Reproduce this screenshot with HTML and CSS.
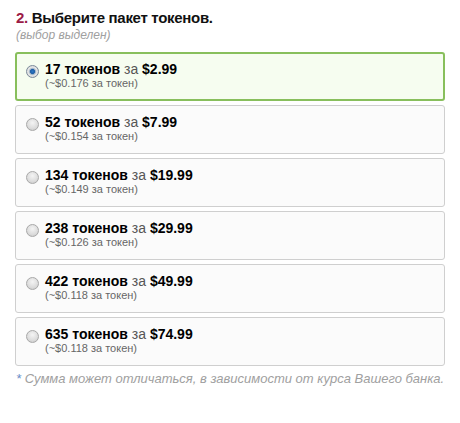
FILE: index.html
```html
<!DOCTYPE html>
<html>
<head>
<meta charset="utf-8">
<link rel="stylesheet" href="styles.css">
</head>
<body>
<div class="wrap">
  <h2 class="title"><span class="num">2.</span> Выберите пакет токенов.</h2>
  <div class="hint">(выбор выделен)</div>
  <ul class="packs">
    <li class="pack selected"><span class="radio on"></span><div class="info"><div class="main"><b>17 токенов</b> за <b>$2.99</b></div><div class="per">(~$0.176 за токен)</div></div></li>
    <li class="pack"><span class="radio"></span><div class="info"><div class="main"><b>52 токенов</b> за <b>$7.99</b></div><div class="per">(~$0.154 за токен)</div></div></li>
    <li class="pack"><span class="radio"></span><div class="info"><div class="main"><b>134 токенов</b> за <b>$19.99</b></div><div class="per">(~$0.149 за токен)</div></div></li>
    <li class="pack"><span class="radio"></span><div class="info"><div class="main"><b>238 токенов</b> за <b>$29.99</b></div><div class="per">(~$0.126 за токен)</div></div></li>
    <li class="pack"><span class="radio"></span><div class="info"><div class="main"><b>422 токенов</b> за <b>$49.99</b></div><div class="per">(~$0.118 за токен)</div></div></li>
    <li class="pack"><span class="radio"></span><div class="info"><div class="main"><b>635 токенов</b> за <b>$74.99</b></div><div class="per">(~$0.118 за токен)</div></div></li>
  </ul>
  <div class="note"><span class="ast">*</span> Сумма может отличаться, в зависимости от курса Вашего банка.</div>
</div>
</body>
</html>
```
FILE: styles.css
```css
html, body { margin: 0; padding: 0; background: #fff; }
body { font-family: "Liberation Sans", Arial, sans-serif; color: #000; }
.wrap { padding: 9px 15px 0 15px; width: 430px; }
.title { margin: 0 0 0 1px; font-size: 15px; line-height: 18px; font-weight: bold; color: #111; letter-spacing: -0.3px; }
.num { color: #9b1b46; }
.hint { margin: 1px 0 0 1px; font-size: 12px; line-height: 14px; font-style: italic; color: #a0a0a0; }
.packs { list-style: none; margin: 10px 0 0 0; padding: 0; display: flex; flex-direction: column; gap: 4px; }
.pack { box-sizing: border-box; height: 49px; border: 1px solid #cfcfcf; border-radius: 3px; background: #fbfbfb; display: flex; align-items: flex-start; padding: 8px 0 0 10px; }
.pack.selected { border: 2px solid #88bf5c; background: #f6fdf0; padding: 7px 0 0 9px; }
.radio { width: 11px; height: 11px; border-radius: 50%; border: 1px solid #a8a8a8; background: radial-gradient(circle at 50% 35%, #f4f4f4 0%, #dcdcdc 60%, #c4c4c4 100%); margin: 4px 6px 0 0; flex: none; box-sizing: content-box; }
.radio.on { border-color: #7a8a9a; background: radial-gradient(circle at 50% 50%, #2c78c4 0%, #1f5fa8 28%, #8fa9c0 34%, #e8e8e8 55%, #c8c8c8 100%); }
.info { display: flex; flex-direction: column; }
.main { font-size: 14px; line-height: 16px; color: #555; }
.main b { color: #000; }
.per { font-size: 11px; line-height: 13px; color: #666; margin-top: 0; }
.note { margin: 5px 0 0 1px; font-size: 13px; line-height: 15px; font-style: italic; color: #a0a0a0; }
.ast { color: #6a8ec8; }
```
